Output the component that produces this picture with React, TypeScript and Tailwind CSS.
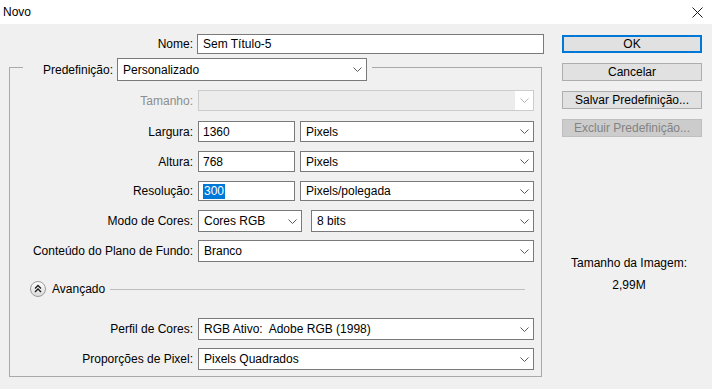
import React from "react";

function Chevron({ color = "#5a5a5a" }: { color?: string }) {
  return (
    <svg width="9" height="5" viewBox="0 0 9 5" className="shrink-0">
      <path d="M0.5 0.5 L4.5 4.5 L8.5 0.5" fill="none" stroke={color} strokeWidth="1" />
    </svg>
  );
}

function Select({ value, className = "" }: { value: string; className?: string }) {
  return (
    <div
      className={`flex items-center justify-between bg-white border border-[#7a7a7a] pl-[5px] pr-[4px] ${className}`}
    >
      <span className="whitespace-pre">{value}</span>
      <Chevron />
    </div>
  );
}

function Input({ children, className = "" }: { children: React.ReactNode; className?: string }) {
  return (
    <div className={`flex items-center bg-white border border-[#7a7a7a] pl-[4px] ${className}`}>
      {children}
    </div>
  );
}

function Label({ children, gray = false }: { children: React.ReactNode; gray?: boolean }) {
  return (
    <div className={`w-[183px] text-right pr-0 shrink-0 ${gray ? "text-[#8d8d8d]" : ""}`}>{children}</div>
  );
}

function Btn({
  children,
  primary = false,
  disabled = false,
}: {
  children: React.ReactNode;
  primary?: boolean;
  disabled?: boolean;
}) {
  const cls = primary
    ? "border-2 border-[#0078d7] bg-[#e1e1e1] text-black"
    : disabled
    ? "border border-[#bfbfbf] bg-[#cccccc] text-[#838383]"
    : "border border-[#adadad] bg-[#e1e1e1] text-black";
  return (
    <div className={`h-[18px] w-[140px] flex items-center justify-center leading-none ${cls}`}>
      {children}
    </div>
  );
}

export default function App() {
  return (
    <div className="w-[712px] h-[389px] overflow-hidden bg-[#f0f0f0] text-[12px] leading-[16px] text-black font-['Liberation_Sans',Arial,sans-serif] flex flex-col">
      {/* Title bar */}
      <div className="h-[24px] bg-white flex items-center justify-between pl-[3px] pr-[9px] shrink-0">
        <span>Novo</span>
        <svg width="11" height="11" viewBox="0 0 11 11">
          <path d="M0.5 0.5 L10.5 10.5 M10.5 0.5 L0.5 10.5" stroke="#1a1a1a" strokeWidth="1" fill="none" />
        </svg>
      </div>

      <div className="flex">
        {/* Left column */}
        <div className="w-[544px] shrink-0 flex flex-col">
          {/* Nome */}
          <div className="mt-[10px] flex items-center">
            <div className="w-[193px] text-right">Nome:</div>
            <Input className="ml-[4px] w-[347px] h-[20px] pl-[5px]">Sem Título-5</Input>
          </div>

          {/* Group box */}
          <div className="mt-[13px] ml-[9px] w-[533px] h-[310px] border border-[#a9a9a9] flex flex-col pb-[6px]">
            {/* legend row */}
            <div className="-mt-[10px] ml-[13px] w-fit flex items-center bg-[#f0f0f0] pr-[5px]">
              <div className="w-[90px] text-right">Predefinição:</div>
              <Select value="Personalizado" className="ml-[4px] w-[250px] h-[23px]" />
            </div>

            {/* Tamanho */}
            <div className="mt-[9px] flex items-center">
              <Label gray>Tamanho:</Label>
              <div className="ml-[5px] w-[336px] h-[21px] border border-[#cccccc] bg-[#ececec] flex justify-end">
                <div className="w-[18px] h-full bg-white flex items-center justify-center">
                  <Chevron color="#b4b4b4" />
                </div>
              </div>
            </div>

            {/* Largura */}
            <div className="mt-[10px] flex items-center">
              <Label>Largura:</Label>
              <Input className="ml-[5px] w-[97px] h-[21px]">1360</Input>
              <Select value="Pixels" className="ml-[5px] w-[234px] h-[21px]" />
            </div>

            {/* Altura */}
            <div className="mt-[9px] flex items-center">
              <Label>Altura:</Label>
              <Input className="ml-[5px] w-[97px] h-[21px]">768</Input>
              <Select value="Pixels" className="ml-[5px] w-[234px] h-[21px]" />
            </div>

            {/* Resolução */}
            <div className="mt-[9px] flex items-center">
              <Label>Resolução:</Label>
              <Input className="ml-[5px] w-[97px] h-[20px]">
                <span className="bg-[#0078d7] text-white px-[1px] leading-[15px]">300</span>
              </Input>
              <Select value="Pixels/polegada" className="ml-[5px] w-[234px] h-[20px]" />
            </div>

            {/* Modo de Cores */}
            <div className="mt-[9px] flex items-center">
              <Label>Modo de Cores:</Label>
              <Select value="Cores RGB" className="ml-[5px] w-[104px] h-[22px]" />
              <Select value="8 bits" className="ml-[9px] w-[223px] h-[22px]" />
            </div>

            {/* Conteúdo */}
            <div className="mt-[8px] flex items-center">
              <Label>Conteúdo do Plano de Fundo:</Label>
              <Select value="Branco" className="ml-[5px] w-[336px] h-[22px]" />
            </div>

            {/* Avançado */}
            <div className="mt-[19px] h-[16px] flex items-center">
              <svg width="16" height="16" viewBox="0 0 16 16" className="ml-[20px] shrink-0">
                <defs>
                  <linearGradient id="g" x1="0" y1="0" x2="0" y2="1">
                    <stop offset="0" stopColor="#ffffff" />
                    <stop offset="1" stopColor="#d9d9d9" />
                  </linearGradient>
                </defs>
                <circle cx="8" cy="8" r="7.5" fill="url(#g)" stroke="#9a9a9a" strokeWidth="1" />
                <path d="M5 7.5 L8 4.5 L11 7.5 M5 11 L8 8 L11 11" fill="none" stroke="#1a1a1a" strokeWidth="1.3" />
              </svg>
              <span className="ml-[6px]">Avançado</span>
              <div className="ml-[5px] mr-[16px] flex-1 h-px bg-[#bdbdbd]" />
            </div>

            {/* Perfil de Cores */}
            <div className="mt-[21px] flex items-center">
              <Label>Perfil de Cores:</Label>
              <Select value="RGB Ativo:  Adobe RGB (1998)" className="ml-[5px] w-[336px] h-[22px]" />
            </div>

            {/* Proporções */}
            <div className="mt-[8px] flex items-center">
              <Label>Proporções de Pixel:</Label>
              <Select value="Pixels Quadrados" className="ml-[5px] w-[336px] h-[22px]" />
            </div>
          </div>
        </div>

        {/* Right column */}
        <div className="ml-[18px] w-[140px] flex flex-col">
          <div className="mt-[11px] flex flex-col gap-[10px]">
            <Btn primary>OK</Btn>
            <Btn>Cancelar</Btn>
            <Btn>Salvar Predefinição...</Btn>
            <Btn disabled>Excluir Predefinição...</Btn>
          </div>
          <div className="mt-[118px] pr-[6px] text-center">Tamanho da Imagem:</div>
          <div className="mt-[6px] pr-[6px] text-center">2,99M</div>
        </div>
      </div>
    </div>
  );
}
